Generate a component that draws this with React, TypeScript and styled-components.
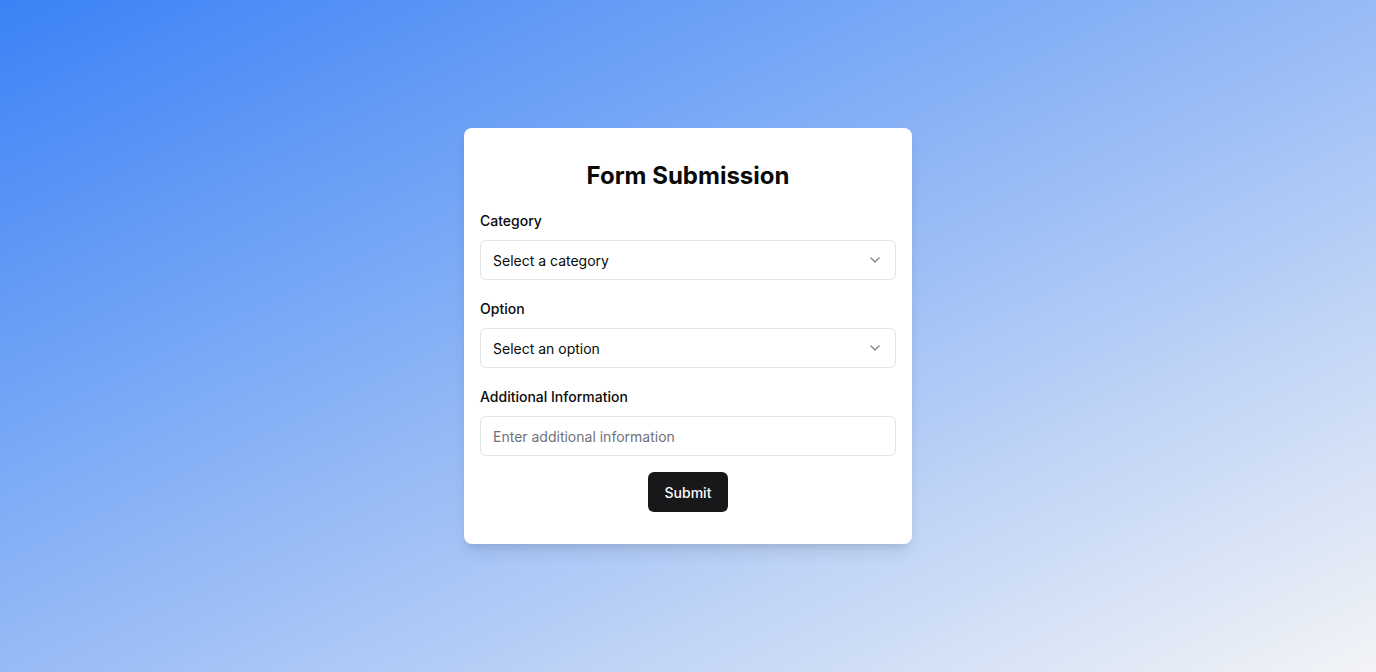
import React from "react";
import styled, { createGlobalStyle } from "styled-components";
import { ChevronDown } from "lucide-react";

const Global = createGlobalStyle`
  * { box-sizing: border-box; }
  html, body { margin: 0; padding: 0; }
  body { font-family: Inter, "Noto Sans", sans-serif; -webkit-font-smoothing: antialiased; }
`;

const Page = styled.div`
  width: 100%;
  min-height: 100vh;
  display: flex;
  align-items: center;
  justify-content: center;
  background: linear-gradient(to bottom right, #3b82f6, #f3f4f6);
`;

const Card = styled.form`
  width: 448px;
  background: #ffffff;
  border-radius: 8px;
  padding: 32px 16px 32px;
  box-shadow: 0 10px 15px -3px rgba(0, 0, 0, 0.1), 0 4px 6px -4px rgba(0, 0, 0, 0.1);
  display: flex;
  flex-direction: column;
`;

const Title = styled.h1`
  margin: 0 0 19px;
  font-size: 24px;
  line-height: 32px;
  font-weight: 700;
  text-align: center;
  color: #0a0a0a;
`;

const Fields = styled.div`
  display: flex;
  flex-direction: column;
  gap: 19px;
`;

const Field = styled.div`
  display: flex;
  flex-direction: column;
  gap: 9px;
`;

const Label = styled.label`
  font-size: 14px;
  line-height: 20px;
  font-weight: 500;
  color: #0a0a0a;
`;

const SelectBox = styled.button`
  height: 40px;
  width: 100%;
  display: flex;
  align-items: center;
  justify-content: space-between;
  padding: 0 12px;
  border: 1px solid #e4e4e7;
  border-radius: 6px;
  background: #ffffff;
  font-family: inherit;
  font-size: 14px;
  color: #0a0a0a;
  cursor: pointer;
  svg { opacity: 0.5; color: #0a0a0a; }
`;

const Input = styled.input`
  height: 40px;
  width: 100%;
  padding: 0 12px;
  border: 1px solid #e4e4e7;
  border-radius: 6px;
  font-family: inherit;
  font-size: 14px;
  color: #0a0a0a;
  outline: none;
  &::placeholder { color: #71717a; }
`;

const Actions = styled.div`
  display: flex;
  justify-content: center;
  margin-top: 16px;
`;

const SubmitButton = styled.button`
  height: 40px;
  padding: 0 17px;
  border: none;
  border-radius: 6px;
  background: #18181b;
  color: #fafafa;
  font-family: inherit;
  font-size: 14px;
  font-weight: 500;
  cursor: pointer;
`;

export default function App() {
  return (
    <>
      <Global />
      <Page>
        <Card onSubmit={(e) => e.preventDefault()}>
          <Title>Form Submission</Title>
          <Fields>
            <Field>
              <Label>Category</Label>
              <SelectBox type="button">
                <span>Select a category</span>
                <ChevronDown size={16} />
              </SelectBox>
            </Field>
            <Field>
              <Label>Option</Label>
              <SelectBox type="button">
                <span>Select an option</span>
                <ChevronDown size={16} />
              </SelectBox>
            </Field>
            <Field>
              <Label>Additional Information</Label>
              <Input placeholder="Enter additional information" />
            </Field>
          </Fields>
          <Actions>
            <SubmitButton type="submit">Submit</SubmitButton>
          </Actions>
        </Card>
      </Page>
    </>
  );
}
